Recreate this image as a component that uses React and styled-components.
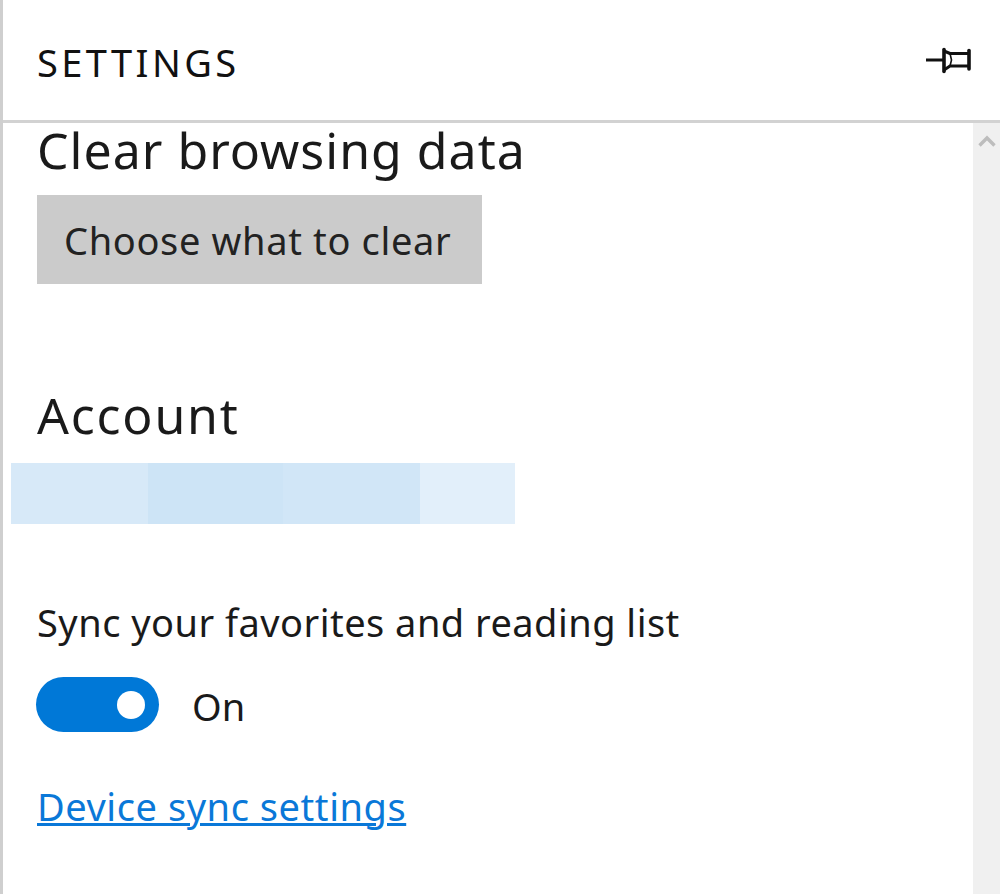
import React from 'react';
import styled, { createGlobalStyle } from 'styled-components';

const GlobalStyle = createGlobalStyle`
    html, body {
        margin: 0;
        padding: 0;
        background: #fff;
    }
    body {
        font-family: "Noto Sans", "Open Sans", sans-serif;
        color: #1a1a1a;
    }
`;

const blocks = [
    { width: 137, color: '#d7e9f8' },
    { width: 135, color: '#cde4f6' },
    { width: 137, color: '#d1e6f7' },
    { width: 95, color: '#e2effa' }
];

const PinIcon = () => (
    <svg width="46" height="30" viewBox="0 0 46 30" fill="none" stroke="#111" strokeWidth="3.6" strokeLinejoin="round">
        <path d="M0 14H17" strokeWidth="3" />
        <path d="M18 3.5V25.5" strokeLinecap="round" />
        <path d="M18 5L24 7.5H42M18 24L24 20H42" strokeWidth="3" />
        <path d="M24 7.5L25.5 14L24 20" strokeWidth="1.6" />
        <path d="M43 4.5V23" strokeLinecap="round" />
    </svg>
);

const ChevronUp = () => (
    <svg width="18" height="12" viewBox="0 0 18 12" fill="none" stroke="#bdbdbd" strokeWidth="3.4">
        <path d="M1.5 10.5L9 3l7.5 7.5" />
    </svg>
);

const App = () => {
    return (
        <Panel>
            <GlobalStyle />
            <Header>
                <Title>SETTINGS</Title>
                <PinButton><PinIcon /></PinButton>
            </Header>
            <Body>
                <Content>
                    <SectionTitle>Clear browsing data</SectionTitle>
                    <ClearButton>Choose what to clear</ClearButton>
                    <AccountTitle>Account</AccountTitle>
                    <AccountStrip>
                        {blocks.map((b) => (
                            <StripBlock key={b.color} $width={b.width} $color={b.color} />
                        ))}
                    </AccountStrip>
                    <SyncLabel>Sync your favorites and reading list</SyncLabel>
                    <ToggleRow>
                        <Toggle><Knob /></Toggle>
                        <ToggleText>On</ToggleText>
                    </ToggleRow>
                    <SyncLink href="#">Device sync settings</SyncLink>
                </Content>
                <Scrollbar><ChevronUp /></Scrollbar>
            </Body>
        </Panel>
    );
};

const Panel = styled.div`
    display: flex;
    flex-direction: column;
    width: 1000px;
    height: 894px;
    box-sizing: border-box;
    border-left: 3px solid #cfcfcf;
    overflow: hidden;
`;

const Header = styled.div`
    display: flex;
    align-items: center;
    justify-content: space-between;
    height: 120px;
    padding: 0 28px 0 34px;
    border-bottom: 3px solid #d2d2d2;
    flex-shrink: 0;
`;

const Title = styled.div`
    margin-top: 4px;
    font-size: 38px;
    letter-spacing: 3.4px;
    color: #111;
`;

const PinButton = styled.div`
    display: flex;
    margin-top: 1px;
`;

const Body = styled.div`
    display: flex;
    flex: 1;
    min-height: 0;
`;

const Content = styled.div`
    flex: 1;
    display: flex;
    flex-direction: column;
    align-items: flex-start;
    padding-left: 34px;
`;

const SectionTitle = styled.div`
    margin-top: -3px;
    font-size: 50px;
    line-height: 60px;
    letter-spacing: 1px;
    color: #1a1a1a;
`;

const ClearButton = styled.button`
    width: 445px;
    height: 89px;
    margin-top: 15px;
    padding: 0 0 0 27px;
    border: none;
    background: #cbcbcb;
    color: #222;
    font-family: inherit;
    font-size: 38px;
    letter-spacing: 0.65px;
    text-align: left;
`;

const AccountTitle = styled(SectionTitle)`
    margin-top: 101px;
    letter-spacing: 1.8px;
`;

const AccountStrip = styled.div`
    display: flex;
    height: 61px;
    margin: 18px 0 0 -26px;
`;

const StripBlock = styled.div`
    width: ${(props) => props.$width}px;
    background: ${(props) => props.$color};
`;

const SyncLabel = styled.div`
    margin-top: 73px;
    font-size: 38px;
    line-height: 50px;
    letter-spacing: 0.47px;
`;

const ToggleRow = styled.div`
    display: flex;
    align-items: center;
    gap: 33px;
    margin-top: 28px;
    margin-left: -1px;
`;

const Toggle = styled.div`
    display: flex;
    align-items: center;
    justify-content: flex-end;
    box-sizing: border-box;
    width: 123px;
    height: 55px;
    padding-right: 14px;
    border-radius: 28px;
    background: #0078d7;
`;

const Knob = styled.div`
    width: 28px;
    height: 28px;
    border-radius: 50%;
    background: #fff;
`;

const ToggleText = styled.div`
    font-size: 38px;
    line-height: 56px;
    margin-top: 3px;
`;

const SyncLink = styled.a`
    margin-top: 47px;
    font-size: 38px;
    line-height: 50px;
    letter-spacing: 0.55px;
    color: #0a78d8;
    text-decoration: underline;
    text-decoration-thickness: 3px;
`;

const Scrollbar = styled.div`
    display: flex;
    justify-content: center;
    align-items: flex-start;
    width: 27px;
    padding-top: 12px;
    background: #f0f0f0;
`;

export default App;
